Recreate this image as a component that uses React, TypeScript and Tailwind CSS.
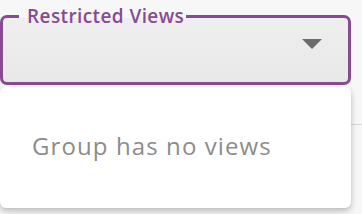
import { type FC } from 'react';

const CaretDown: FC = () => (
  <svg width="20" height="10" viewBox="0 0 20 10" className="block">
    <path d="M0 0 L20 0 L10 10 Z" fill="#6b6b6b" />
  </svg>
);

const App: FC = () => {
  return (
    <div
      className="w-[362px] h-[214px] bg-[#f7f7f7] overflow-hidden relative"
      style={{ fontFamily: '"Open Sans", Lato, sans-serif' }}
    >
      <div className="absolute right-0 top-[124px] w-[12px] h-px bg-[#d8d8d8]" />
      <div className="w-[351px] pt-[5px]">
        <fieldset className="border-[3px] border-[#874b93] rounded-[7px] bg-gradient-to-b from-[#efefef] to-[#e8e8e8] h-[80px] flex items-center justify-end pr-[26px] pl-[16px]">
          <legend className="pl-[8px] pr-[2px] text-[19px] leading-[22px] font-semibold tracking-[0.4px] text-[#874b93]">
            Restricted Views
          </legend>
          <div className="mt-[-22px]">
            <CaretDown />
          </div>
        </fieldset>
      </div>
      <div className="relative mt-[2px] w-[351px] h-[121px] bg-white rounded-[6px] shadow-[0_3px_6px_rgba(0,0,0,0.25)] flex items-center pl-[32px]">
        <span className="text-[24px] text-[#8c8c8c] leading-none tracking-[1.1px] mt-[-4px]">Group has no views</span>
      </div>
    </div>
  );
};

export default App;
